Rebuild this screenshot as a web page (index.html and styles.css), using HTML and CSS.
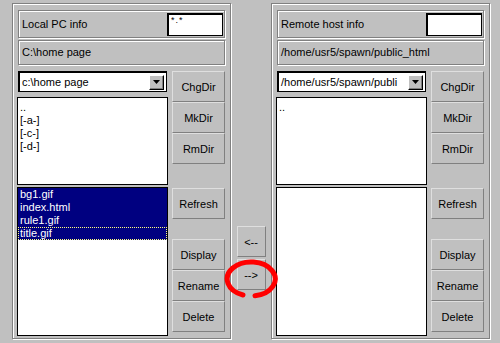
FILE: index.html
```html
<!DOCTYPE html>
<html lang="en">
<head>
    <meta charset="UTF-8">
    <meta name="viewport" content="width=device-width, initial-scale=1.0">
    <title>FTP client</title>
    <link rel="stylesheet" href="styles.css">
</head>
<body>
    <div class="app">
        <section class="panel">
            <div class="info">
                <span>Local PC info</span>
                <div class="field mask">*.*</div>
            </div>
            <div class="path">C:\home page</div>
            <div class="body">
                <div class="lists">
                    <div class="combo">
                        <span class="combo-text">c:\home page</span>
                        <span class="drop"><svg width="7" height="4" viewBox="0 0 7 4"><path d="M0 0h7L3.5 4z" fill="#000"/></svg></span>
                    </div>
                    <ul class="list dirs">
                        <li>..</li>
                        <li>[-a-]</li>
                        <li>[-c-]</li>
                        <li>[-d-]</li>
                    </ul>
                    <ul class="list files">
                        <li class="sel">bg1.gif</li>
                        <li class="sel">index.html</li>
                        <li class="sel">rule1.gif</li>
                        <li class="sel focus">title.gif</li>
                    </ul>
                </div>
                <div class="tools">
                    <button class="btn">ChgDir</button>
                    <button class="btn">MkDir</button>
                    <button class="btn">RmDir</button>
                    <button class="btn refresh">Refresh</button>
                    <button class="btn display">Display</button>
                    <button class="btn">Rename</button>
                    <button class="btn">Delete</button>
                </div>
            </div>
        </section>

        <div class="transfer">
            <button class="btn arrow">&lt;--</button>
            <button class="btn arrow">--&gt;</button>
            <svg class="ring" width="60" height="46" viewBox="0 0 60 46">
                <path d="M22 39 A24 17 0 1 1 34 39.8" fill="none" stroke="#f00" stroke-width="5" stroke-linecap="round"/>
            </svg>
        </div>

        <section class="panel">
            <div class="info">
                <span>Remote host info</span>
                <div class="field"></div>
            </div>
            <div class="path">/home/usr5/spawn/public_html</div>
            <div class="body">
                <div class="lists">
                    <div class="combo">
                        <span class="combo-text">/home/usr5/spawn/publi</span>
                        <span class="drop"><svg width="7" height="4" viewBox="0 0 7 4"><path d="M0 0h7L3.5 4z" fill="#000"/></svg></span>
                    </div>
                    <ul class="list dirs">
                        <li>..</li>
                    </ul>
                    <ul class="list files"></ul>
                </div>
                <div class="tools">
                    <button class="btn">ChgDir</button>
                    <button class="btn">MkDir</button>
                    <button class="btn">RmDir</button>
                    <button class="btn refresh">Refresh</button>
                    <button class="btn display">Display</button>
                    <button class="btn">Rename</button>
                    <button class="btn">Delete</button>
                </div>
            </div>
        </section>
    </div>
</body>
</html>
```

FILE: styles.css
```css
body {
    margin: 0;
    background: #c0c0c0;
    font-family: "Liberation Sans", Arial, sans-serif;
    font-size: 11px;
    color: #000;
}
.app {
    display: flex;
    width: 500px;
    height: 343px;
    box-sizing: border-box;
    padding: 3px 0 0 12px;
}
.panel {
    width: 219px;
    height: 336px;
    box-sizing: border-box;
    border: 1px solid #808080;
    box-shadow: 1px 1px 0 #fff, inset 1px 1px 0 #fff;
    padding: 6px 5px 0 4px;
}
.info {
    display: flex;
    align-items: center;
    justify-content: space-between;
    height: 28px;
    margin-left: 1px;
    box-sizing: border-box;
    border: 1px solid #808080;
    box-shadow: 1px 1px 0 #fff, inset 1px 1px 0 #fff;
    padding: 0 1px 0 3px;
}
.field {
    width: 56px;
    height: 23px;
    box-sizing: border-box;
    background: #fff;
    border: 1px solid #000;
    border-top-width: 2px;
    border-left-width: 2px;
}
.mask {
    font-size: 9px;
    line-height: 9px;
    padding: 1px 0 0 2px;
    letter-spacing: 1px;
}
.path {
    height: 25px;
    margin: 2px 0 0 1px;
    box-sizing: border-box;
    border: 1px solid #808080;
    box-shadow: 1px 1px 0 #fff, inset 1px 1px 0 #fff;
    padding-left: 3px;
    line-height: 23px;
}
.body {
    display: flex;
    gap: 4px;
    margin-top: 6px;
}
.lists {
    width: 151px;
    display: flex;
    flex-direction: column;
}
.combo {
    display: flex;
    align-items: center;
    justify-content: space-between;
    height: 21px;
    margin-left: 1px;
    width: 149px;
    box-sizing: border-box;
    background: #fff;
    border: 1px solid #000;
    border-top-width: 2px;
    border-left-width: 2px;
    padding: 0 2px 0 2px;
    white-space: nowrap;
    overflow: hidden;
}
.drop {
    display: flex;
    align-items: center;
    justify-content: center;
    width: 15px;
    height: 15px;
    flex: none;
    box-sizing: border-box;
    background: #c0c0c0;
    border: 1px solid;
    border-color: #fff #000 #000 #fff;
    box-shadow: inset -1px -1px 0 #808080;
}
.list {
    list-style: none;
    margin: 0;
    padding: 2px 0 0 0;
    background: #fff;
    border: 1px solid #000;
    box-sizing: border-box;
}
.list li {
    height: 13px;
    line-height: 13px;
    padding-left: 2px;
}
.dirs {
    height: 88px;
    margin-top: 5px;
    padding-top: 3px;
}
.files {
    height: 149px;
    margin-top: 2px;
    padding-top: 0;
}
.sel {
    background: #000080;
    color: #fff;
}
.focus {
    outline: 1px dotted #ffff80;
    outline-offset: -1px;
}
.tools {
    width: 53px;
    display: flex;
    flex-direction: column;
}
.btn {
    display: block;
    width: 53px;
    height: 31px;
    padding: 0;
    background: #c0c0c0;
    border: 1px solid;
    border-color: #dfdfdf #808080 #808080 #dfdfdf;
    font-family: "Liberation Sans", Arial, sans-serif;
    font-size: 11px;
    color: #000;
}
.refresh {
    margin-top: 24px;
}
.display {
    margin-top: 20px;
}
.transfer {
    position: relative;
    width: 40px;
    display: flex;
    flex-direction: column;
    align-items: center;
    padding-top: 223px;
    gap: 2px;
}
.arrow {
    width: 29px;
    height: 31px;
}
.ring {
    position: absolute;
    left: -10px;
    top: 253px;
}
```
